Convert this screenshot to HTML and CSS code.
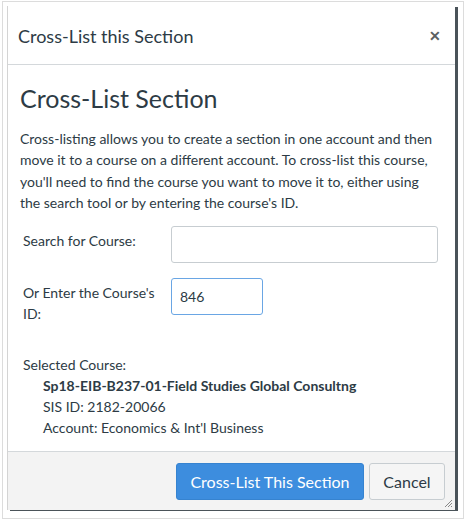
FILE: index.html
```html
<!DOCTYPE html>
<html lang="en">
<head>
<meta charset="utf-8">
<title>Cross-List this Section</title>
<link rel="stylesheet" href="styles.css">
</head>
<body>
<div class="frame">
  <div class="dialog">
    <div class="dialog-header">
      <span class="dialog-title">Cross-List this Section</span>
      <span class="close">&#x2715;</span>
    </div>
    <div class="dialog-body">
      <h2 class="heading">Cross-List Section</h2>
      <p class="intro">Cross-listing allows you to create a section in one account and then move it to a course on a different account. To cross-list this course, you'll need to find the course you want to move it to, either using the search tool or by entering the course's ID.</p>
      <div class="form-row">
        <label class="form-label">Search for Course:</label>
        <input class="text-input search-input" type="text" value="">
      </div>
      <div class="form-row">
        <label class="form-label">Or Enter the Course's ID:</label>
        <input class="text-input id-input" type="text" value="846">
      </div>
      <div class="selected">
        <div class="selected-label">Selected Course:</div>
        <div class="selected-name">Sp18-EIB-B237-01-Field Studies Global Consultng</div>
        <div class="selected-detail">SIS ID: 2182-20066</div>
        <div class="selected-detail">Account: Economics &amp; Int'l Business</div>
      </div>
    </div>
    <div class="dialog-footer">
      <button class="btn btn-primary">Cross-List This Section</button>
      <button class="btn btn-default">Cancel</button>
      <svg class="resize" width="8" height="8" viewBox="0 0 8 8">
        <path d="M1 8 L8 1 M4 8 L8 4 M7 8 L8 7" stroke="#888" stroke-width="1"/>
      </svg>
    </div>
  </div>
</div>
</body>
</html>
```

FILE: styles.css
```css
* { box-sizing: border-box; }

html, body {
  margin: 0;
  padding: 0;
  background: #ffffff;
}

body {
  font-family: Lato, "Open Sans", "Liberation Sans", sans-serif;
  color: #2d3b45;
  width: 466px;
  height: 520px;
  overflow: hidden;
}

.frame {
  margin: 1px 0 0 2px;
  width: 462px;
  height: 518px;
  border: 1px solid #dcdcdc;
  padding: 4px 0 0 4px;
}

.dialog {
  position: relative;
  width: 448px;
  height: 504px;
  background: #ffffff;
  border-left: 1px solid #d4d4d4;
  box-shadow: 3px 1px 0 #4a5359;
  display: flex;
  flex-direction: column;
}

.dialog-header {
  height: 59px;
  border-bottom: 1px solid #d4d8db;
  display: flex;
  align-items: center;
  justify-content: space-between;
  padding: 1px 14px 0 10px;
}

.dialog-title {
  font-size: 18px;
  color: #2d3b45;
}

.close {
  font-size: 14px;
  font-weight: bold;
  color: #5a5f63;
}

.dialog-body {
  flex: 1;
  padding: 0 14px 0 12px;
}

.heading {
  margin: 18px 0 0 0;
  font-size: 25px;
  line-height: 30px;
  font-weight: 400;
  color: #2d3b45;
}

.intro {
  margin: 15px 0 0 0;
  font-size: 14px;
  line-height: 21.3px;
}

.form-row {
  display: grid;
  grid-template-columns: 148px auto;
  align-items: start;
  margin: 13px 0 0 3px;
}

.form-row + .form-row {
  margin-top: 15px;
}

.form-label {
  font-size: 14px;
  line-height: 21px;
  padding-top: 4px;
  padding-right: 8px;
}

.text-input {
  height: 37px;
  border: 1px solid #c7cdd1;
  border-radius: 3px;
  font-family: Lato, "Open Sans", "Liberation Sans", sans-serif;
  font-size: 14px;
  color: #2d3b45;
  padding: 0 8px;
  background: #fff;
  outline: none;
}

.search-input { width: 267px; }

.id-input {
  width: 92px;
  border-color: #6aa6e4;
}

.selected {
  margin: 30px 0 0 3px;
  font-size: 14px;
  line-height: 21px;
}

.selected-name {
  font-weight: bold;
  padding-left: 20px;
}

.selected-detail {
  padding-left: 20px;
}

.dialog-footer {
  position: relative;
  height: 59px;
  border-top: 1px solid #d4d8db;
  background: #f3f3f3;
  display: flex;
  justify-content: flex-end;
  align-items: flex-start;
  gap: 5px;
  padding: 11px 10px 0 0;
}

.btn {
  height: 37px;
  border-radius: 3px;
  font-family: Lato, "Open Sans", "Liberation Sans", sans-serif;
  font-size: 16px;
  padding: 0;
  white-space: nowrap;
  cursor: pointer;
}

.btn-primary {
  width: 188px;
  background: #3d8dde;
  border: 1px solid #3683d0;
  color: #ffffff;
}

.btn-default {
  width: 76px;
  background: #f5f5f5;
  border: 1px solid #c7cdd1;
  color: #2d3b45;
}

.resize {
  position: absolute;
  right: 3px;
  bottom: 3px;
}
```
